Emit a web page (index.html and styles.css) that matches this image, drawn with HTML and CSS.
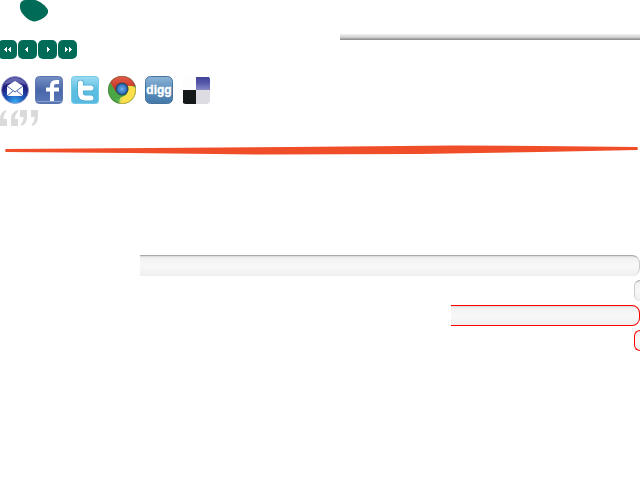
FILE: index.html
```html
<!DOCTYPE html>
<html lang="en">
<head>
<meta charset="utf-8">
<title>Interface elements</title>
<link rel="stylesheet" href="styles.css">
</head>
<body>
<header class="top">
  <svg class="blob" viewBox="0 0 28 22" aria-hidden="true"><path d="M1 2Q3 0 5 0H15C20 1 26 6 28 10C29 15 23 19 17 21C11 23 5 17 2 13C0 10-1 5 1 2Z" fill="#006b57"/></svg>
  <div class="rule"></div>
</header>
<nav class="pager">
  <button class="page" aria-label="First"><svg viewBox="0 0 19 19"><path d="M9 7v5H8v-1H7v-1H6V9h1V8h1V7zM13 7v5h-1v-1h-1v-1h-1V9h1V8h1V7z"/></svg></button>
  <button class="page" aria-label="Previous"><svg viewBox="0 0 19 19"><path d="M10 7v5H9v-1H8v-1H7V9h1V8h1V7z"/></svg></button>
  <button class="page" aria-label="Next"><svg viewBox="0 0 19 19"><path d="M9 7h1v1h1v1h1v1h-1v1h-1v1H9z"/></svg></button>
  <button class="page" aria-label="Last"><svg viewBox="0 0 19 19"><path d="M7 7h1v1h1v1h1v1H9v1H8v1H7zM11 7h1v1h1v1h1v1h-1v1h-1v1h-1z"/></svg></button>
</nav>
<nav class="share">
  <a href="#mail" aria-label="Email"><svg viewBox="0 0 30 30">
    <defs><radialGradient id="mail" cx=".5" cy=".95" r=".95"><stop offset="0" stop-color="#3aaef5"/><stop offset=".35" stop-color="#1d56b8"/><stop offset=".7" stop-color="#1f1d7c"/><stop offset="1" stop-color="#4a48a0"/></radialGradient></defs>
    <circle cx="15" cy="15" r="13.500" fill="url(#mail)" stroke="#8f96c8" stroke-width=".8"/>
    <path d="M4 10C6 5 10 3 15 3s9 2 11 7C19 7 11 7 4 10Z" fill="#8f93cc" opacity=".5"/>
    <path d="M7 11l8-5 8 5v10H7z" fill="#fff"/><path d="M7 11l8 6 8-6M7 21l6-5M23 21l-6-5" fill="none" stroke="#3c56a5" stroke-width=".9"/>
  </svg></a>
  <a href="#facebook" aria-label="Facebook"><svg viewBox="0 0 30 30">
    <defs><linearGradient id="fb" x2="0" y2="1"><stop stop-color="#7790c4"/><stop offset=".5" stop-color="#4867aa"/><stop offset="1" stop-color="#5977b8"/></linearGradient></defs>
    <rect x="1.500" y="1.500" width="27" height="27" rx="4" fill="url(#fb)" stroke="#5a74ad"/>
    <path d="M2.500 26.500h25" stroke="#8ba1d0"/>
    <path d="M18 26V11q0-4 4-4h3M12 14.500h13" fill="none" stroke="#fff" stroke-width="4"/>
  </svg></a>
  <a href="#twitter" aria-label="Twitter"><svg viewBox="0 0 30 30">
    <defs><linearGradient id="tw" x2="0" y2="1"><stop stop-color="#9bdcf2"/><stop offset=".5" stop-color="#5dbfe2"/><stop offset="1" stop-color="#57b9e2"/></linearGradient></defs>
    <rect x="1.500" y="1.500" width="27" height="27" rx="3" fill="url(#tw)" stroke="#74c9e6"/>
    <path d="M10.500 8V18q0 5 5 5H21M10.500 13H21" fill="none" stroke="#48a9cf" stroke-width="6.500" stroke-linecap="round" stroke-linejoin="round"/>
    <path d="M10.500 8V18q0 5 5 5H21M10.500 13H21" fill="none" stroke="#fff" stroke-width="5" stroke-linecap="round" stroke-linejoin="round"/>
  </svg></a>
  <a href="#chrome" aria-label="Chrome"><svg viewBox="0 0 30 30">
    <defs><clipPath id="disc"><circle cx="15" cy="15" r="14"/></clipPath><radialGradient id="core"><stop stop-color="#6fb4ec"/><stop offset="1" stop-color="#245fae"/></radialGradient><linearGradient id="red" x2="0" y2="1"><stop stop-color="#e8604c"/><stop offset="1" stop-color="#bb2a20"/></linearGradient></defs>
    <g clip-path="url(#disc)"><path d="M0 0h30v30H0z" fill="#4aa544"/><path d="M3 7L7 0h23v11H17q-6 0-8 6z" fill="url(#red)"/><path d="M20 11q6-1 10 3v16H12l1-7 6-3q4-5 1-9z" fill="#fbe04a"/><path d="M1 10l8 13q3 3 7-1l-3 8" fill="#8bcc6c" opacity=".4"/></g>
    <circle cx="15" cy="14" r="6.500" fill="#2d3f4c"/><circle cx="15" cy="14" r="5.500" fill="url(#core)"/>
    <circle cx="15" cy="15" r="13.700" fill="none" stroke="#55503a" stroke-width=".6" opacity=".6"/>
  </svg></a>
  <a href="#digg" aria-label="Digg"><svg viewBox="0 0 30 30">
    <defs><linearGradient id="dg" x2="0" y2="1"><stop stop-color="#8cb4d6"/><stop offset=".5" stop-color="#5e90bd"/><stop offset="1" stop-color="#4279aa"/></linearGradient></defs>
    <rect x="1.500" y="1.500" width="27" height="27" rx="5" fill="url(#dg)" stroke="#44749e"/>
    <text class="digg" x="15" y="19" text-anchor="middle">digg</text>
  </svg></a>
  <a href="#delicious" aria-label="Delicious"><svg viewBox="0 0 30 30">
    <defs><clipPath id="tile"><rect x="1" y="1" width="28" height="28" rx="4"/></clipPath><linearGradient id="de" x2="0" y2="1"><stop stop-color="#41439a"/><stop offset=".45" stop-color="#5557a8"/><stop offset="1" stop-color="#8688c6"/></linearGradient></defs>
    <g clip-path="url(#tile)"><path d="M1 1h14v14H1z" fill="#fdfdfd"/><path d="M15 2h14v13H15z" fill="url(#de)"/><path d="M2 15h13v14H2z" fill="#151919"/><path d="M15 15h14v14H15z" fill="#dddce3"/></g>
  </svg></a>
</nav>
<div class="quotes">
  <svg viewBox="0 0 38 16" aria-hidden="true"><g fill="#dadada"><path d="M6 0v2Q3.500 4 3.500 9H7v7H0V9Q0 2 6 0Z"/><path d="M18 0v2Q15 4 15 9h3v7h-7V9q0-7 7-9Z"/><path d="M20 0h7v7q0 7-6 9v-2q2.500-2 2.500-7H20ZM31 0h7v7q0 7-6 9v-2q2.500-2 2.500-7H31Z"/></g></svg>
</div>
<div class="stroke">
  <svg viewBox="0 0 640 10" preserveAspectRatio="none" aria-hidden="true"><path d="M6 4L150 3 290 2 400 1 455 .500 540 1 637 2Q639 3.500 637 5L540 7 420 9 265 9.500 130 8 6 7Q4 5.500 6 4Z" fill="#f04e29"/></svg>
</div>
<main class="fields">
  <div class="field wide"></div>
  <div class="field cap"></div>
  <div class="field error medium"></div>
  <div class="field error cap"></div>
</main>
</body>
</html>
```
FILE: styles.css
```css
* { box-sizing: border-box; }
body { margin: 0; background: #fff; font-family: "Liberation Sans", sans-serif; }
svg { display: block; }

.top { display: flex; justify-content: space-between; height: 40px; padding-left: 20px; }
.blob { width: 28px; height: 22px; }
.rule {
  align-self: flex-end;
  width: 300px;
  height: 6px;
  background: linear-gradient(#f2f2f2, #d5d5d5 50%, #858585);
}

.pager { display: flex; gap: 1px; margin-left: -2px; }
.page { width: 19px; height: 19px; padding: 0; border: 0; border-radius: 5px; background: #006b57; }
.page svg { width: 19px; height: 19px; fill: #fff; }

.share { display: flex; gap: 7px; padding-top: 16px; }
.share svg { width: 30px; height: 30px; }
.share a:nth-child(2) { margin-left: -3px; }
.share a:nth-child(3) { margin-left: -1px; }
.digg { fill: #fff; stroke: #fff; stroke-width: .3px; font: bold 12px "Liberation Sans", sans-serif; }

.quotes { padding-top: 5px; }
.quotes svg { width: 38px; height: 16px; }

.stroke { padding-top: 19px; }
.stroke svg { width: 100%; height: 10px; }

.fields { display: flex; flex-direction: column; align-items: flex-end; gap: 4px; padding-top: 100px; }
.field {
  height: 21px;
  border-top: 1px solid #aaa;
  border-right: 1px solid #ccc;
  border-radius: 0 8px 8px 0;
  background: linear-gradient(#d8d8d8, #f2f2f2 2px, #f8f8f8 10px, #efefef);
}
.wide { width: 500px; }
.medium { width: 189px; }
.cap { width: 6px; border-right: 0; border-left: 1px solid #ccc; border-radius: 6px 0 0 6px; }
.error { border-color: #f00; border-bottom: 1px solid #f00; }
```
